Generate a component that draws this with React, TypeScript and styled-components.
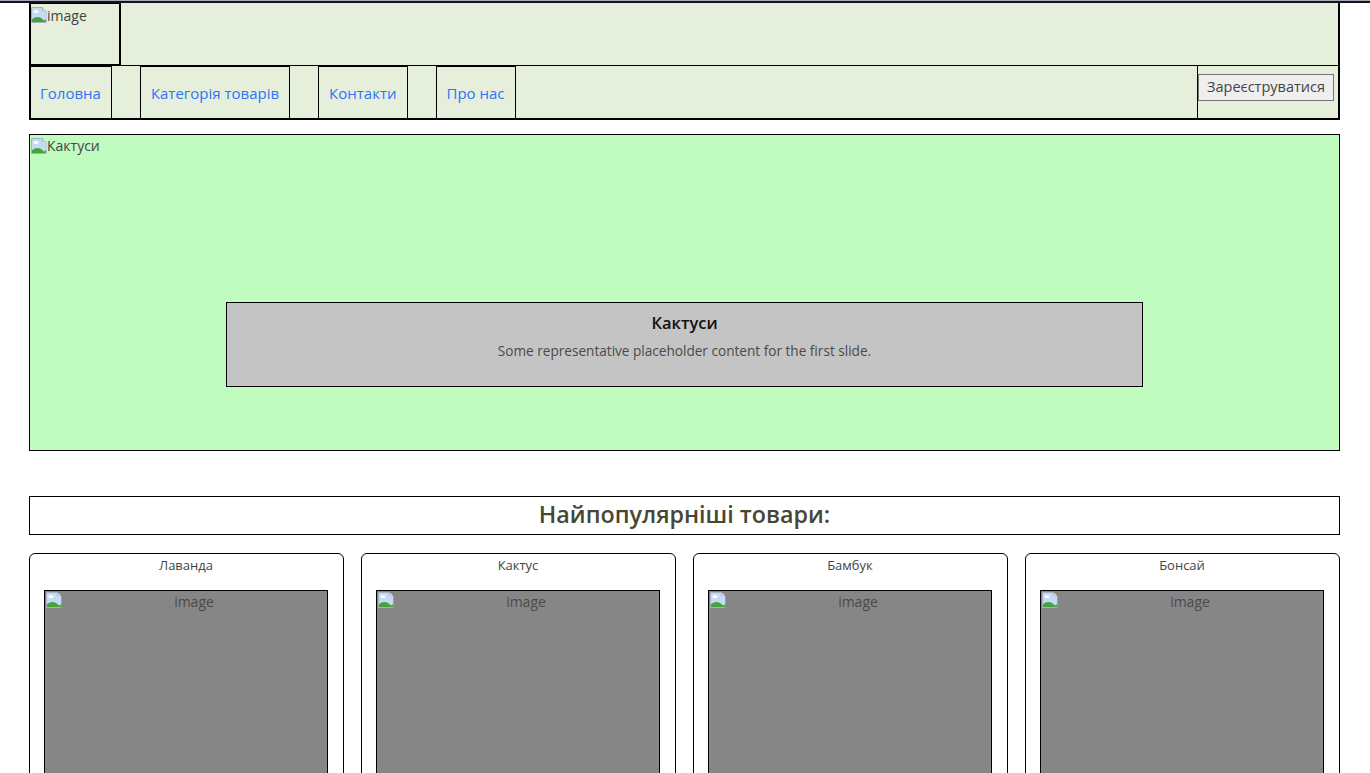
import React from "react";
import styled, { createGlobalStyle } from "styled-components";

const Global = createGlobalStyle`
  html, body { margin: 0; padding: 0; background: #fff; }
  body { font-family: "Open Sans", "Noto Sans", sans-serif; color: #212529; overflow: hidden; }
  * { box-sizing: border-box; }
`;

const TopStrip = styled.div`
  height: 3px;
  border-top: 1px solid #a3abbb;
  background: #141414;
`;

const Page = styled.div`
  padding: 0 30px 0 29px;
`;

const Header = styled.header`
  background: #e6efdc;
  border: 2px solid #000;
  border-top: none;
`;

const TopRow = styled.div`
  display: flex;
  height: 63px;
  border-bottom: 1px solid #000;
`;

const LogoBox = styled.div`
  position: relative;
  width: 90px;
  border-right: 2px solid #000;
  border-bottom: 1px solid #000;
  border-top: 1px solid #000;
  font-size: 14px;
  color: #444;
  line-height: 20px;
  padding-left: 16px;
  padding-top: 2px;
`;

const NavRow = styled.nav`
  display: flex;
  align-items: stretch;
  height: 52px;
`;

const NavList = styled.ul`
  display: flex;
  gap: 28px;
  list-style: none;
  margin: 0;
  padding: 0;
  flex: 1;
`;

const NavItem = styled.li<{ $first?: boolean }>`
  display: flex;
  align-items: center;
  padding: 0 10px 0 ${(p) => (p.$first ? "9px" : "10px")};
  border: 1px solid #000;
  border-left: ${(p) => (p.$first ? "none" : "1px solid #000")};
  border-bottom: none;
`;

const NavLink = styled.a`
  color: #2d74fb;
  text-decoration: none;
  font-size: 15px;
`;

const RegisterBox = styled.div`
  width: 141px;
  border-left: 1px solid #000;
  padding: 8px 0 0 0;
`;

const RegisterButton = styled.button`
  font-family: "Open Sans", "Noto Sans", sans-serif;
  font-size: 14.5px;
  color: #444;
  background: #efefef;
  border: 1px solid #767676;
  height: 27px;
  width: 136px;
  padding: 0 4px;
  line-height: 1;
`;

const Hero = styled.section`
  margin-top: 14px;
  height: 317px;
  border: 1px solid #000;
  background: #c0fbc0;
  display: flex;
  flex-direction: column;
  justify-content: space-between;
  padding-bottom: 63px;
`;

const HeroAlt = styled.div`
  position: relative;
  font-size: 14px;
  color: #444;
  line-height: 20px;
  padding-left: 17px;
  padding-top: 1px;
`;

const Caption = styled.div`
  margin: 0 196px 0 196px;
  height: 85px;
  background: #c4c4c4;
  border: 1px solid #000;
  text-align: center;
  padding-top: 8px;
`;

const CaptionTitle = styled.h5`
  margin: 0;
  font-size: 16.5px;
  font-weight: 600;
  color: #111;
  line-height: 24px;
`;

const CaptionText = styled.p`
  margin: 6px 0 0;
  font-size: 13.6px;
  color: #4a4a4a;
  line-height: 20px;
`;

const SectionTitle = styled.h2`
  margin: 45px 0 0;
  height: 39px;
  border: 1px solid #000;
  text-align: center;
  font-size: 23.3px;
  font-weight: 600;
  color: #474733;
  line-height: 34px;
`;

const CardGrid = styled.div`
  margin-top: 18px;
  display: grid;
  grid-template-columns: repeat(4, 1fr);
  gap: 17px;
`;

const Card = styled.div`
  border: 1px solid #000;
  border-radius: 6px;
  padding: 0 15px 20px 14px;
  text-align: center;
`;

const CardTitle = styled.div`
  font-size: 13px;
  color: #444;
  line-height: 20px;
  padding-top: 1px;
  height: 36px;
`;

const CardImage = styled.div`
  position: relative;
  height: 260px;
  background: #868686;
  border: 1px solid #000;
  font-size: 14px;
  color: #4a4a4a;
  line-height: 22px;
  padding-left: 16px;
`;

const IconSlot = styled.span<{ $top: number; $left: number }>`
  position: absolute;
  top: ${(p) => p.$top}px;
  left: ${(p) => p.$left}px;
  width: 16px;
  height: 16px;
  display: block;
`;

const BrokenIcon: React.FC = () => (
  <svg width="16" height="16" viewBox="0 0 16 16">
    <path d="M0.5 0.5h11l3.5 3.5v11.5h-14.5z" fill="#f4f7fb" stroke="#a6b0c0" strokeWidth="1" />
    <path d="M11.5 0.5v3.5h3.5" fill="#e4e9f1" stroke="#a6b0c0" strokeWidth="1" />
    <path d="M1 1h10v3.5h4V13H1z" fill="#c3dbf4" />
    <ellipse cx="5" cy="4.5" rx="2.6" ry="1.5" fill="#fff" />
    <path d="M1 15V12.2Q5.5 8.6 10.5 11.2L13 13.5l2-1.2V15z" fill="#48a23c" />
  </svg>
);

const items = ["Лаванда", "Кактус", "Бамбук", "Бонсай"];

export default function App() {
  return (
    <>
      <Global />
      <TopStrip />
      <Page>
        <Header>
          <TopRow>
            <LogoBox>
              <IconSlot $top={3} $left={0}>
                <BrokenIcon />
              </IconSlot>
              image
            </LogoBox>
          </TopRow>
          <NavRow>
            <NavList>
              <NavItem $first>
                <NavLink href="#">Головна</NavLink>
              </NavItem>
              <NavItem>
                <NavLink href="#">Категорія товарів</NavLink>
              </NavItem>
              <NavItem>
                <NavLink href="#">Контакти</NavLink>
              </NavItem>
              <NavItem>
                <NavLink href="#">Про нас</NavLink>
              </NavItem>
            </NavList>
            <RegisterBox>
              <RegisterButton>Зареєструватися</RegisterButton>
            </RegisterBox>
          </NavRow>
        </Header>

        <Hero>
          <HeroAlt>
            <IconSlot $top={3} $left={1}>
              <BrokenIcon />
            </IconSlot>
            Кактуси
          </HeroAlt>
          <Caption>
            <CaptionTitle>Кактуси</CaptionTitle>
            <CaptionText>Some representative placeholder content for the first slide.</CaptionText>
          </Caption>
        </Hero>

        <SectionTitle>Найпопулярніші товари:</SectionTitle>

        <CardGrid>
          {items.map((name) => (
            <Card key={name}>
              <CardTitle>{name}</CardTitle>
              <CardImage>
                <IconSlot $top={1} $left={1}>
                  <BrokenIcon />
                </IconSlot>
                image
              </CardImage>
            </Card>
          ))}
        </CardGrid>
      </Page>
    </>
  );
}
